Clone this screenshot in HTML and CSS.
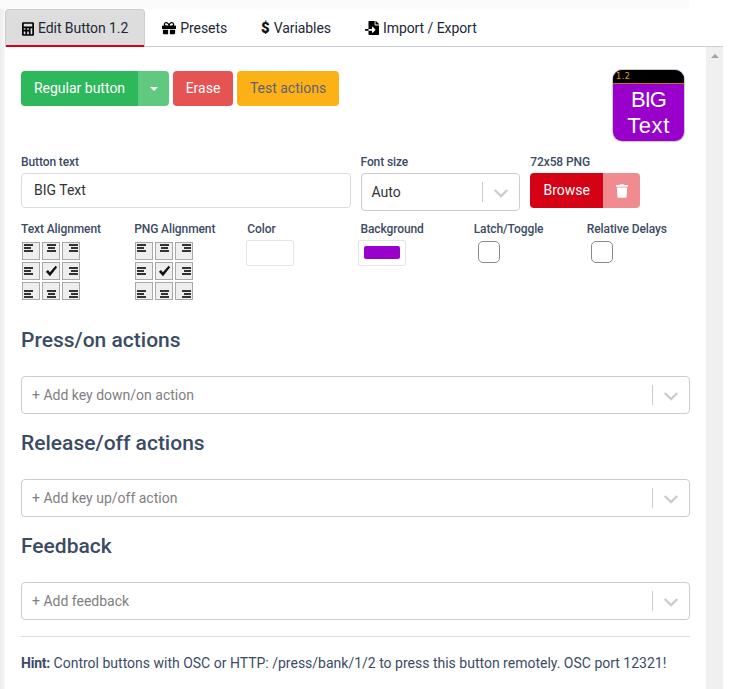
FILE: index.html
```html
<!DOCTYPE html>
<html lang="en">
<head>
    <meta charset="UTF-8">
    <title>Edit Button 1.2</title>
    <link rel="stylesheet" href="styles.css">
</head>
<body>
    <div class="topstrip"></div>
    <div class="page">
        <div class="panel">
            <ul class="tabs">
                <li class="tab active">
                    <svg class="ico" viewBox="0 0 448 512"><path fill-rule="evenodd" d="M48 0h352c26 0 48 22 48 48v416c0 26-22 48-48 48H48c-26 0-48-22-48-48V48C0 22 22 0 48 0zm16 64v96h320V64H64zm0 160v64h64v-64H64zm128 0v64h64v-64h-64zm128 0v224h64V224h-64zM64 352v96h64v-96H64zm128 0v96h64v-96h-64z"/></svg>
                    Edit Button 1.2
                </li>
                <li class="tab">
                    <svg class="ico gift" viewBox="0 0 512 512"><path d="M32 448c0 18 14 32 32 32h160V320H32v128zm256 32h160c18 0 32-14 32-32V320H288v160zM480 160h-42c6-12 10-26 10-40 0-49-39-88-88-88-42 0-69 21-104 69-35-48-62-69-104-69-49 0-88 39-88 88 0 14 4 28 10 40H32c-18 0-32 14-32 32v80c0 9 7 16 16 16h480c9 0 16-7 16-16v-80c0-18-14-32-32-32zm-328 0c-22 0-40-18-40-40s18-40 40-40c20 0 35 3 81 72l3 8h-84zm208 0h-84l3-8c46-69 61-72 81-72 22 0 40 18 40 40s-18 40-40 40z"/></svg>
                    Presets
                </li>
                <li class="tab"><span class="dollar">$</span> Variables</li>
                <li class="tab">
                    <svg class="ico" viewBox="0 0 512 512"><path d="M16 288c-9 0-16 7-16 16v32c0 9 7 16 16 16h112v-64H16zm489-183L407 7c-5-4-11-7-17-7h-6v128h128v-6c0-6-3-12-7-17zm-153 31V0H152c-13 0-24 11-24 24v264h128v-65c0-14 17-21 27-11l96 96c6 7 6 17 0 23l-96 96c-10 10-27 3-27-11v-64H128v136c0 13 11 24 24 24h336c13 0 24-11 24-24V160H376c-13 0-24-11-24-24z"/></svg>
                    Import / Export
                </li>
            </ul>

            <div class="content">
                <div class="toolbar">
                    <div class="actions">
                        <div class="btn-group">
                            <button class="btn green">Regular button</button>
                            <button class="btn green-light"><span class="caret"></span></button>
                        </div>
                        <button class="btn red">Erase</button>
                        <button class="btn yellow">Test actions</button>
                    </div>
                    <div class="preview">
                        <div class="preview-top">1.2</div>
                        <div class="preview-text"><div class="line-big">BIG</div><div class="line-text">Text</div></div>
                    </div>
                </div>

                <div class="row row-main">
                    <div class="col-6">
                        <label>Button text</label>
                        <div class="input">BIG Text</div>
                    </div>
                    <div class="col-3">
                        <label>Font size</label>
                        <div class="select font-select">
                            <span class="value">Auto</span>
                            <span class="sep"></span>
                            <svg class="chev" viewBox="0 0 20 20"><path d="M4.5 7.2l5.500 5.300 5.500-5.300 1.600 1.500-7.100 7-7.100-7z"/></svg>
                        </div>
                    </div>
                    <div class="col-3">
                        <label>72x58 PNG</label>
                        <div class="btn-group">
                            <button class="btn browse">Browse</button>
                            <button class="btn trash">
                                <svg class="ico-trash" viewBox="0 0 448 512"><path d="M432 32H312l-9-19c-4-8-12-13-21-13H166c-9 0-17 5-21 13l-9 19H16C7 32 0 39 0 48v32c0 9 7 16 16 16h416c9 0 16-7 16-16V48c0-9-7-16-16-16zM53 467c2 25 23 45 48 45h246c25 0 46-20 48-45l21-339H32z"/></svg>
                            </button>
                        </div>
                    </div>
                </div>

                <div class="row row-opts">
                    <div class="col-2">
                        <label>Text Alignment</label>
                        <div class="align-grid">
                            <span class="cell l t"><i></i><i></i><i></i></span>
                            <span class="cell c t"><i></i><i></i><i></i></span>
                            <span class="cell r t"><i></i><i></i><i></i></span>
                            <span class="cell l m"><i></i><i></i><i></i></span>
                            <span class="cell checked"><svg viewBox="0 0 16 16"><path d="M.5 9l2.800-2.500 2.500 3L13.500 1l2 2-9.500 12z"/></svg></span>
                            <span class="cell r m"><i></i><i></i><i></i></span>
                            <span class="cell l b"><i></i><i></i><i></i></span>
                            <span class="cell c b"><i></i><i></i><i></i></span>
                            <span class="cell r b"><i></i><i></i><i></i></span>
                        </div>
                    </div>
                    <div class="col-2">
                        <label>PNG Alignment</label>
                        <div class="align-grid">
                            <span class="cell l t"><i></i><i></i><i></i></span>
                            <span class="cell c t"><i></i><i></i><i></i></span>
                            <span class="cell r t"><i></i><i></i><i></i></span>
                            <span class="cell l m"><i></i><i></i><i></i></span>
                            <span class="cell checked"><svg viewBox="0 0 16 16"><path d="M.5 9l2.800-2.500 2.500 3L13.500 1l2 2-9.500 12z"/></svg></span>
                            <span class="cell r m"><i></i><i></i><i></i></span>
                            <span class="cell l b"><i></i><i></i><i></i></span>
                            <span class="cell c b"><i></i><i></i><i></i></span>
                            <span class="cell r b"><i></i><i></i><i></i></span>
                        </div>
                    </div>
                    <div class="col-2">
                        <label>Color</label>
                        <div class="swatch"></div>
                    </div>
                    <div class="col-2">
                        <label>Background</label>
                        <div class="swatch bg-swatch"><span class="swatch-color"></span></div>
                    </div>
                    <div class="col-2">
                        <label>Latch/Toggle</label>
                        <div class="check"></div>
                    </div>
                    <div class="col-2">
                        <label>Relative Delays</label>
                        <div class="check"></div>
                    </div>
                </div>

                <h4 class="first">Press/on actions</h4>
                <div class="select">
                    <span class="placeholder">+ Add key down/on action</span>
                    <span class="sep"></span>
                    <svg class="chev" viewBox="0 0 20 20"><path d="M4.5 7.2l5.500 5.300 5.500-5.300 1.600 1.500-7.100 7-7.100-7z"/></svg>
                </div>

                <h4>Release/off actions</h4>
                <div class="select">
                    <span class="placeholder">+ Add key up/off action</span>
                    <span class="sep"></span>
                    <svg class="chev" viewBox="0 0 20 20"><path d="M4.5 7.2l5.500 5.300 5.500-5.300 1.600 1.500-7.100 7-7.100-7z"/></svg>
                </div>

                <h4>Feedback</h4>
                <div class="select">
                    <span class="placeholder">+ Add feedback</span>
                    <span class="sep"></span>
                    <svg class="chev" viewBox="0 0 20 20"><path d="M4.5 7.2l5.500 5.300 5.500-5.300 1.600 1.500-7.100 7-7.100-7z"/></svg>
                </div>

                <hr>
                <p class="hint"><b>Hint:</b> Control buttons with OSC or HTTP: /press/bank/1/2 to press this button remotely. OSC port 12321!</p>
            </div>
        </div>
        <div class="scrollbar"><span class="arrow"></span></div>
    </div>
</body>
</html>
```

FILE: styles.css
```css
* {
    margin: 0;
    padding: 0;
    box-sizing: border-box;
}
html, body {
    height: 100%;
    overflow: hidden;
}
body {
    font-family: Roboto, "Liberation Sans", sans-serif;
    font-size: 14px;
    line-height: 21px;
    color: #3c4b64;
    background-color: #fff;
}
.topstrip {
    height: 9px;
    margin-right: 40px;
    background-color: #fbfbfb;
}
.page {
    display: flex;
    height: 680px;
    padding-right: 6px;
    background: linear-gradient(to right, #eee 0, #f3f3f3 4px, #fff 5px);
}
.panel {
    flex: 1;
    min-width: 0;
    padding-left: 5px;
}
.scrollbar {
    width: 17px;
    margin-top: 37px;
    border-top: 1px solid #c8ced3;
    background-color: #f0f0f0;
    display: flex;
    justify-content: center;
    padding-top: 7px;
}
.arrow {
    width: 0;
    height: 0;
    border-left: 4px solid transparent;
    border-right: 4px solid transparent;
    border-bottom: 4px solid #a3a3a3;
}

/* tabs */
.tabs {
    display: flex;
    list-style: none;
    height: 38px;
    border-bottom: 1px solid #c8ced3;
    color: #1d2735;
    letter-spacing: -0.07px;
}
.tab {
    height: 38px;
    padding: 0 17px;
    display: flex;
    align-items: center;
    gap: 4px;
    white-space: nowrap;
}
.tab.active {
    background-color: #ddd;
    border: 1px solid #c8ced3;
    border-bottom: 0;
    border-radius: 4px 4px 0 0;
    box-shadow: inset 0 -2px 0 #d50215;
    padding: 0 16px;
}
.ico {
    width: 14px;
    height: 14px;
    fill: #000;
    flex: none;
}
.tab.active .ico {
    width: 12px;
}
.dollar {
    font-weight: 900;
    color: #111;
    font-size: 15px;
}

/* main area */
.content {
    background-color: #fff;
    padding: 22px 16px 0 16px;
}
.toolbar {
    display: flex;
    justify-content: space-between;
    align-items: flex-start;
    padding-right: 6px;
    margin-bottom: 12px;
}
.actions {
    display: flex;
    gap: 4px;
    padding-top: 2px;
}
.btn-group {
    display: flex;
}
.btn {
    font: inherit;
    height: 35px;
    border: 0;
    border-radius: 4px;
    color: #fff;
    padding: 0 12px;
    white-space: nowrap;
    display: flex;
    align-items: center;
    justify-content: center;
}
.btn-group .btn:first-child {
    border-radius: 4px 0 0 4px;
}
.btn-group .btn:last-child {
    border-radius: 0 4px 4px 0;
}
.green {
    width: 117px;
    background-color: #2eb85c;
}
.green-light {
    width: 31px;
    background-color: #5ec97f;
}
.caret {
    border-left: 4px solid transparent;
    border-right: 4px solid transparent;
    border-top: 4px solid #fff;
}
.red {
    width: 60px;
    background-color: #e55353;
}
.yellow {
    width: 102px;
    background-color: #fcb116;
    color: #5d6470;
}
.preview {
    width: 71px;
    height: 71px;
    margin-top: 1px;
    border-radius: 9px;
    overflow: hidden;
    background-color: #9900cc;
    box-shadow: 0 0 0 1px #ccc;
    color: #fff;
    text-align: center;
}
.preview-top {
    height: 14px;
    background-color: #000;
    border-bottom: 1px solid #c07c00;
    color: #e0a800;
    font-family: "DejaVu Sans", sans-serif;
    font-size: 8px;
    line-height: 13px;
    letter-spacing: 0.6px;
    text-align: left;
    padding-left: 3px;
}
.preview-text {
    font-family: "Liberation Sans", sans-serif;
    font-size: 22px;
    line-height: 25.5px;
    padding-top: 3px;
}
.line-big {
    letter-spacing: -1px;
}
.line-text {
    letter-spacing: 0.6px;
}

/* form rows */
.row {
    display: grid;
    grid-template-columns: repeat(12, 1fr);
    column-gap: 10px;
}
.row-main {
    margin-bottom: 9px;
    align-items: start;
}
.col-6 { grid-column: span 6; }
.col-3 { grid-column: span 3; }
.col-2 { grid-column: span 2; }
label {
    display: block;
    font-size: 12px;
    font-weight: 500;
    line-height: 18px;
    margin-bottom: 2px;
    letter-spacing: -0.1px;
    white-space: nowrap;
}
.input {
    height: 35px;
    border: 1px solid #d8dbe0;
    border-radius: 4px;
    padding: 6px 12px;
    color: #333;
}
.select {
    display: flex;
    align-items: center;
    height: 38px;
    border: 1px solid #ccc;
    border-radius: 4px;
    padding: 0 8px 0 10px;
    background-color: #fff;
}
.placeholder {
    flex: 1;
    color: #808080;
}
.value {
    flex: 1;
    color: #333;
}
.sep {
    width: 1px;
    height: 20px;
    background-color: #ccc;
    margin-right: 8px;
}
.chev {
    width: 20px;
    height: 20px;
    fill: #ccc;
    flex: none;
}
.browse {
    width: 73px;
    background-color: #d50215;
}
.trash {
    width: 37px;
    background-color: #f08c8f;
}
.ico-trash {
    width: 12px;
    height: 14px;
    fill: #fff;
}

/* alignment grids and small inputs */
.align-grid {
    display: grid;
    grid-template-columns: repeat(3, 18px);
    grid-auto-rows: 18px;
    gap: 2px;
    margin: 4px 0 0 1px;
}
.cell {
    border: 1px solid #a8a8a8;
    background-color: #eee;
    padding: 1px;
    display: flex;
    flex-direction: column;
    gap: 1px;
}
.cell i {
    display: block;
    width: 9px;
    height: 2px;
    background-color: #333;
}
.cell i:nth-child(2) {
    width: 7px;
}
.l { align-items: flex-start; }
.c { align-items: center; }
.r { align-items: flex-end; }
.t { justify-content: flex-start; }
.m { justify-content: center; }
.b { justify-content: flex-end; }
.checked svg {
    width: 13px;
    height: 13px;
    margin: 1px;
    fill: #111;
}
.swatch {
    width: 48px;
    height: 26px;
    margin-left: -1px;
    border: 1px solid #e4e4e4;
    border-radius: 2px;
    background-color: #fff;
}
.bg-swatch {
    margin-left: -2px;
    padding: 5px;
}
.swatch-color {
    display: block;
    width: 36px;
    height: 13px;
    border-radius: 2px;
    background-color: #9900cc;
}
.check {
    width: 22px;
    height: 22px;
    margin: 3px 0 0 4px;
    border: 1px solid #8a8a8a;
    border-radius: 5px;
    background-color: #fff;
}

/* sections */
h4 {
    font-size: 21px;
    font-weight: 500;
    line-height: 24px;
    margin: 17px 0 24px;
}
h4.first {
    margin-top: 28px;
}
hr {
    border: 0;
    border-top: 1px solid #d8dbe0;
    margin: 16px 0;
}
.hint b {
    font-weight: 700;
    letter-spacing: -0.2px;
}
```
